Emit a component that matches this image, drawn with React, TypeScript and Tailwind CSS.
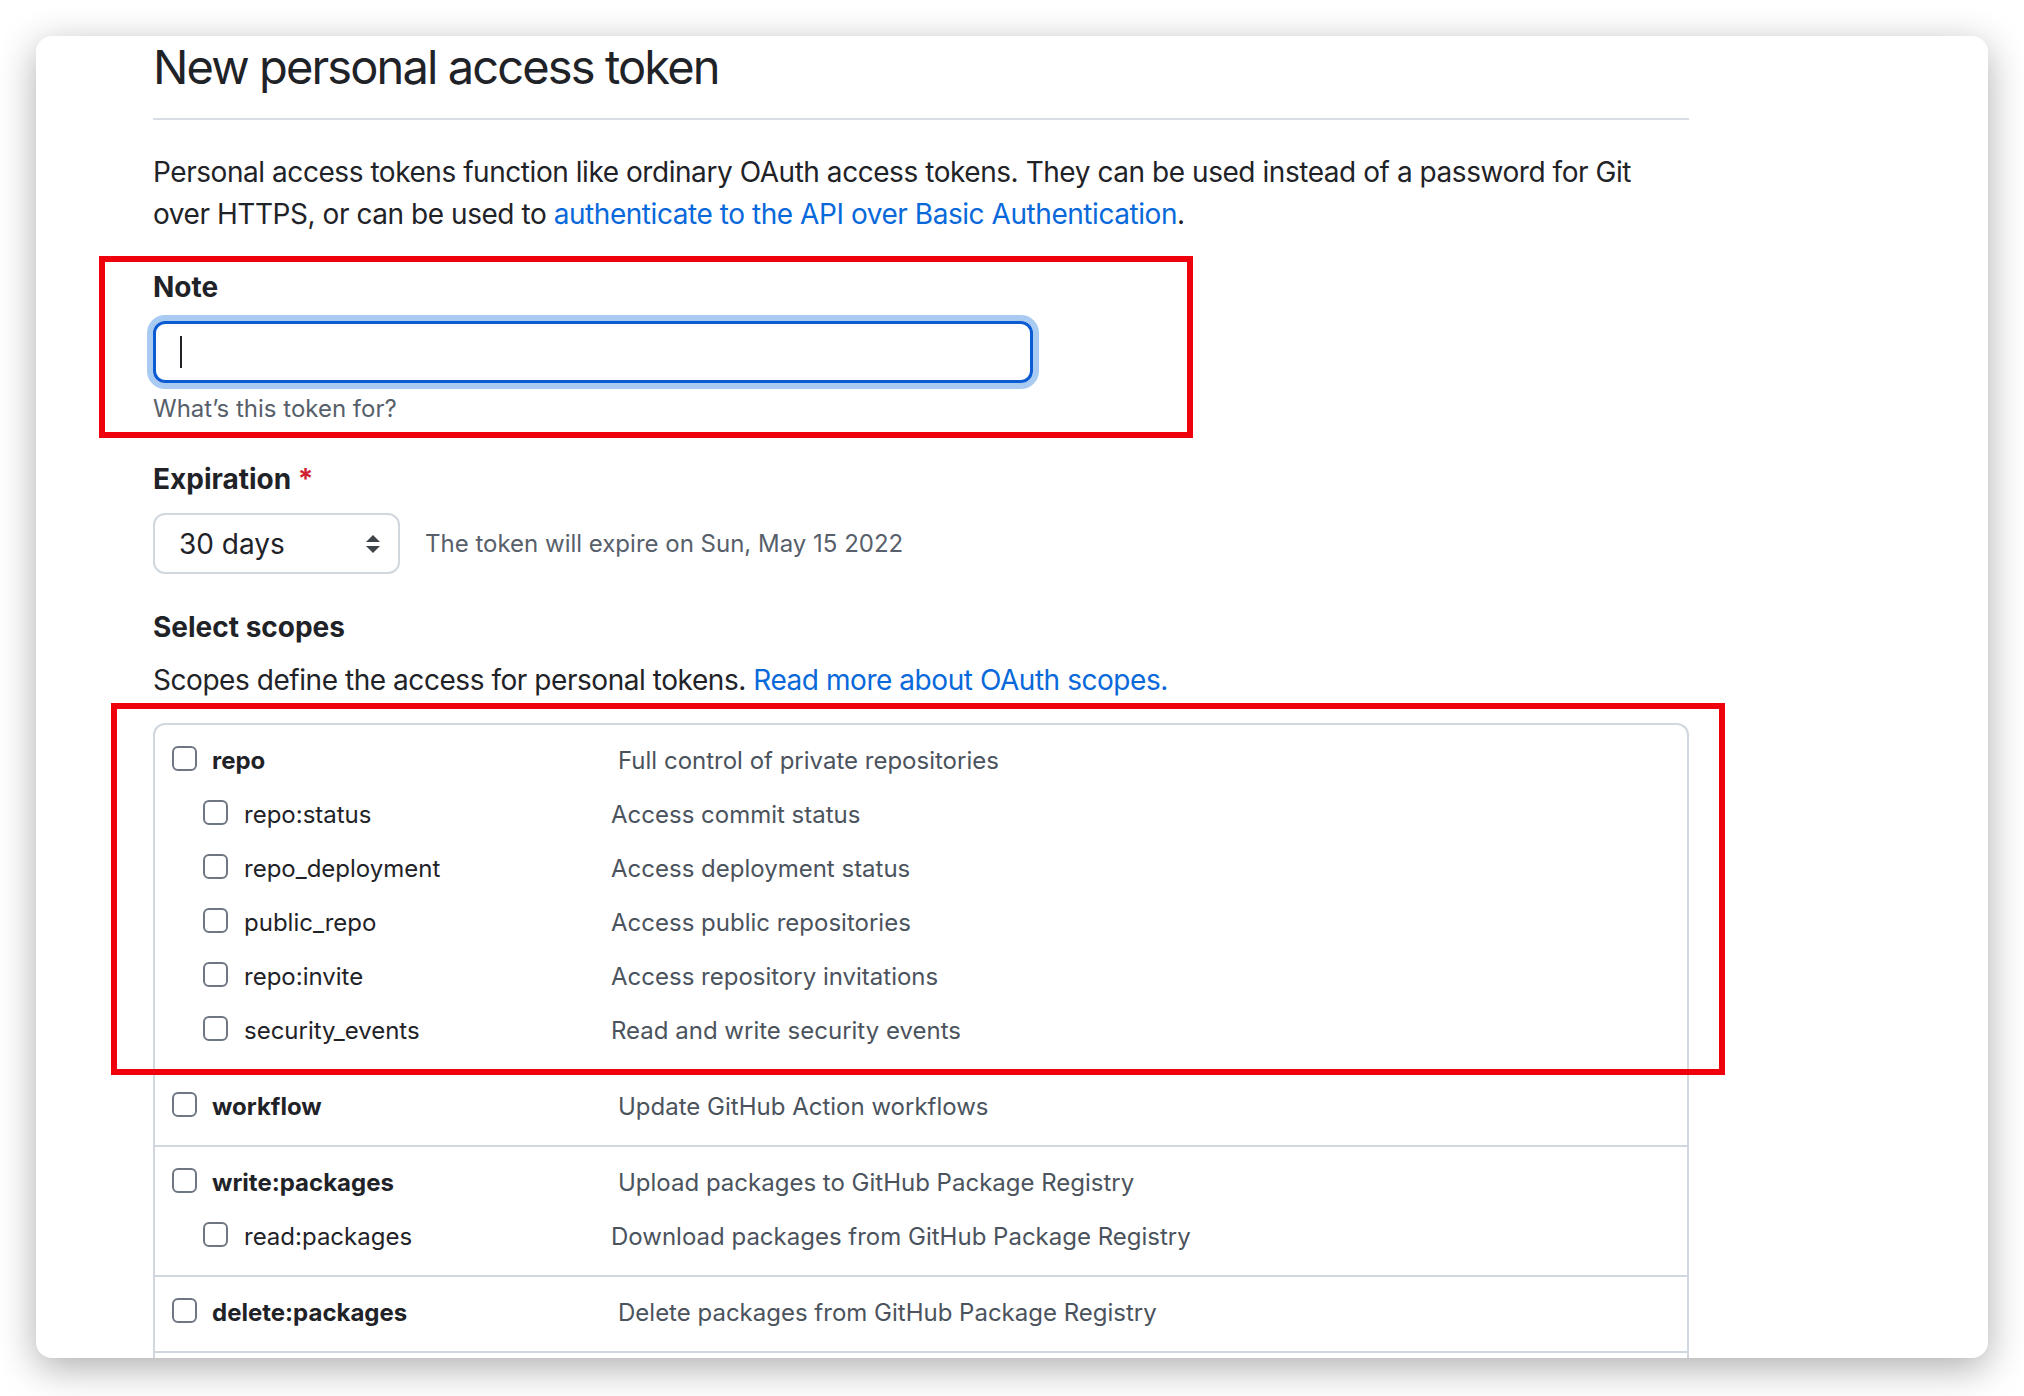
import React from "react";

type Scope = { name: string; desc: string; children?: { name: string; desc: string }[] };

const scopes: Scope[] = [
  {
    name: "repo",
    desc: "Full control of private repositories",
    children: [
      { name: "repo:status", desc: "Access commit status" },
      { name: "repo_deployment", desc: "Access deployment status" },
      { name: "public_repo", desc: "Access public repositories" },
      { name: "repo:invite", desc: "Access repository invitations" },
      { name: "security_events", desc: "Read and write security events" },
    ],
  },
  { name: "workflow", desc: "Update GitHub Action workflows" },
  {
    name: "write:packages",
    desc: "Upload packages to GitHub Package Registry",
    children: [{ name: "read:packages", desc: "Download packages from GitHub Package Registry" }],
  },
  { name: "delete:packages", desc: "Delete packages from GitHub Package Registry" },
];

function Checkbox() {
  return <span className="block w-[25px] h-[25px] shrink-0 -mt-[5px] rounded-[6px] border-2 border-[#6e7781] bg-white" />;
}

function SelectArrows() {
  return (
    <svg width="16" height="18" viewBox="0 0 16 18" className="shrink-0">
      <path d="M8 0 L15 7 H1 Z" fill="#3f444b" />
      <path d="M1 11 H15 L8 18 Z" fill="#3f444b" />
    </svg>
  );
}

function ScopeGroup({ scope }: { scope: Scope }) {
  return (
    <div className="pt-[9px] pb-[11px] border-b-2 border-[#d0d7de]">
      <div className="h-[54px] flex items-center pl-[17px]">
        <Checkbox />
        <span className="w-[406px] ml-[15px] font-bold text-[24px] text-[#1f2328]">{scope.name}</span>
        <span className="text-[24px] text-[#4b535d]">{scope.desc}</span>
      </div>
      {scope.children?.map((c) => (
        <div key={c.name} className="h-[54px] flex items-center pl-[48px]">
          <Checkbox />
          <span className="w-[367px] ml-[16px] text-[24px] text-[#1f2328]">{c.name}</span>
          <span className="text-[24px] text-[#4b535d]">{c.desc}</span>
        </div>
      ))}
    </div>
  );
}

export default function App() {
  return (
    <div
      className="w-full h-[1396px] bg-white overflow-hidden pt-[36px] pl-[36px]"
      style={{ fontFamily: "Inter, 'Liberation Sans', sans-serif" }}
    >
      <div className="w-[1952px] h-[1322px] rounded-[16px] bg-white overflow-hidden shadow-[0_10px_38px_rgba(0,0,0,0.32)] pl-[117px]">
        <div className="w-[1536px] text-[#1f2328]">
          <h2 className="pt-[1px] pb-[21px] border-b-2 border-[#d8dee4] text-[47px] leading-[60px] font-normal tracking-[-0.04em]">
            New personal access token
          </h2>

          <p className="mt-[31px] text-[28px] leading-[42px] tracking-[-0.016em]">
            Personal access tokens function like ordinary OAuth access tokens. They can be used instead of a password
            for Git over HTTPS, or can be used to{" "}
            <a href="#" className="text-[#0969da]">
              authenticate to the API over Basic Authentication
            </a>
            <span>.</span>
          </p>

          <div className="relative mt-[31px]">
            <div className="absolute left-[-54px] top-[-10px] w-[1094px] h-[182px] border-[6px] border-[#f0000c] pointer-events-none" />
            <label className="block font-bold text-[28px] leading-[42px]">Note</label>
            <div className="mt-[13px] w-[880px] h-[62px] rounded-[12px] border-[3px] border-[#0a5bd4] shadow-[0_0_0_6px_rgba(9,105,218,0.35)] flex items-center pl-[24px]">
              <span className="block w-[2px] h-[32px] bg-[#1f2328]" />
            </div>
            <p className="mt-[8px] text-[24px] leading-[36px] text-[#57606a]">What’s this token for?</p>
          </div>

          <div className="mt-[31px]">
            <label className="block font-bold text-[28px] leading-[42px]">
              Expiration <span className="text-[#cf222e]">*</span>
            </label>
            <div className="mt-[13px] flex items-center gap-[25px]">
              <div className="w-[247px] h-[61px] rounded-[12px] border-2 border-[#d0d7de] flex items-center justify-between pl-[24px] pr-[17px]">
                <span className="text-[28px]">30 days</span>
                <SelectArrows />
              </div>
              <span className="text-[24px] text-[#57606a]">The token will expire on Sun, May 15 2022</span>
            </div>
          </div>

          <h3 className="mt-[32px] font-bold text-[28px] leading-[42px]">Select scopes</h3>
          <p className="mt-[11px] text-[28px] leading-[42px] tracking-[-0.016em]">
            Scopes define the access for personal tokens.{" "}
            <a href="#" className="text-[#0969da]">
              Read more about OAuth scopes.
            </a>
          </p>

          <div className="relative mt-[22px]">
            <div className="absolute left-[-42px] top-[-20px] w-[1614px] h-[372px] border-[6px] border-[#f0000c] pointer-events-none z-10" />
            <div className="border-2 border-b-0 border-[#d0d7de] rounded-t-[12px]">
              {scopes.map((s) => (
                <ScopeGroup key={s.name} scope={s} />
              ))}
              <div className="h-[40px]" />
            </div>
          </div>
        </div>
      </div>
    </div>
  );
}
